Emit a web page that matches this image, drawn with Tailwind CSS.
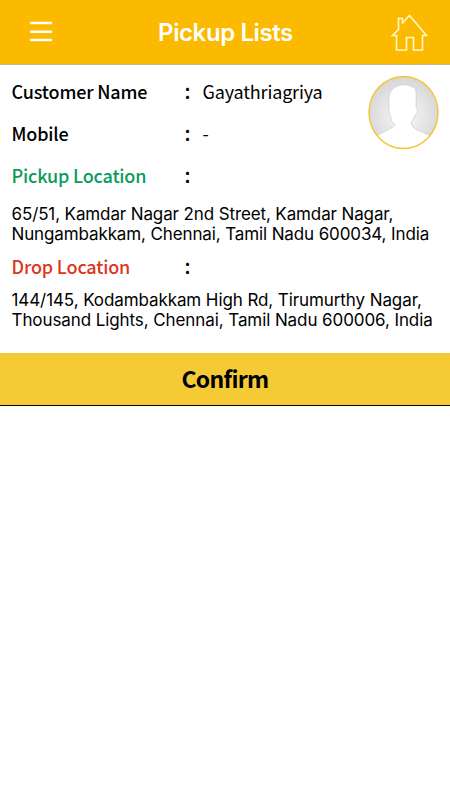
<!DOCTYPE html>
<html lang="en">
<head>
    <meta charset="UTF-8">
    <meta name="viewport" content="width=device-width, initial-scale=1.0">
    <title>Pickup Lists</title>
    <script src="https://cdn.jsdelivr.net/npm/@tailwindcss/browser@4"></script>
</head>
<body class="bg-white text-black font-['Noto_Sans_CJK_SC',sans-serif]">
    <!-- Header -->
    <header class="h-[65px] bg-[#fbba00] border-b border-[#c3b795] flex items-center justify-between pl-[28px] pr-[22px]">
        <button aria-label="Menu" class="w-[33px]">
            <svg class="block" width="25" height="22" viewBox="0 0 25 22" fill="none" stroke="#fff" stroke-width="2.5" stroke-linecap="round">
                <path d="M3 2h20M3 10.7h20M3 19h20"/>
            </svg>
        </button>
        <h1 class="font-['Inter',sans-serif] font-semibold text-[24px] leading-none text-white whitespace-nowrap pt-px tracking-[-0.4px]">Pickup Lists</h1>
        <button aria-label="Home">
            <svg class="block" width="38" height="38" viewBox="0 0 38 38" fill="none" stroke="#fff8c8" stroke-width="1.6">
                <path d="M6.5 37V22.5H2.5L8.5 16.5V5.5H12.5V10L19.5 2.5L36.5 22.5H32.5V37H23.5V24.5H16.5V37Z"/>
            </svg>
        </button>
    </header>

    <!-- Customer details -->
    <main class="h-[288px] pl-[11.5px] pr-[11px] pt-[5px] relative">
        <div class="flex items-center h-[42px] text-[18px] tracking-[-0.17px]">
            <span class="w-[173px] font-medium">Customer Name</span>
            <span class="w-[18px] font-medium text-[20px]">:</span>
            <span>Gayathriagriya</span>
        </div>
        <div class="flex items-center h-[42px] text-[18px] tracking-[-0.17px]">
            <span class="w-[173px] font-medium">Mobile</span>
            <span class="w-[18px] font-medium text-[20px]">:</span>
            <span>-</span>
        </div>
        <div class="flex items-center h-[42px] text-[18px] tracking-[-0.17px]">
            <span class="w-[173px] font-medium text-[#0a9b5b]">Pickup Location</span>
            <span class="w-[18px] font-medium text-[20px]">:</span>
        </div>
        <p class="font-['Inter',sans-serif] text-[17px] leading-[20px] tracking-[-0.12px] mt-[8px] whitespace-nowrap">65/51, Kamdar Nagar 2nd Street, Kamdar Nagar,<br>Nungambakkam, Chennai, Tamil Nadu 600034, India</p>
        <div class="flex items-center h-[42px] text-[18px] tracking-[-0.17px] mt-px">
            <span class="w-[173px] font-medium text-[#dc3522]">Drop Location</span>
            <span class="w-[18px] font-medium text-[20px]">:</span>
        </div>
        <p class="font-['Inter',sans-serif] text-[17px] leading-[20px] tracking-[-0.09px] mt-[3px] whitespace-nowrap">144/145, Kodambakkam High Rd, Tirumurthy Nagar,<br>Thousand Lights, Chennai, Tamil Nadu 600006, India</p>

        <!-- Avatar -->
        <svg class="absolute right-[11px] top-[10px]" width="72" height="75" viewBox="0 0 72 75">
            <defs>
                <radialGradient id="shade" cx=".5" cy=".55" r=".55">
                    <stop offset="0" stop-color="#fafafa"/>
                    <stop offset="1" stop-color="#d6d6d6"/>
                </radialGradient>
                <clipPath id="round"><ellipse cx="36.5" cy="37.5" rx="34.5" ry="36"/></clipPath>
            </defs>
            <ellipse cx="36.5" cy="37.5" rx="34.5" ry="36" fill="url(#shade)"/>
            <path clip-path="url(#round)" fill="#fff" stroke="#c8c8c8" stroke-width=".7" d="M0 66C10 60 18 57 24 53C26 52 27 51 28 50L24.5 46C24 44 24 41 23 40C21 38 22 33 22 31C22 24 21 20 24 16C28 10 36 9 40 10C43 10 45 12 48 13C50 17 49 26 49 31C51 34 51 39 48 40C47 43 47 45 44 47C45 49 45 51 47 53C53 57 65 60 72 66V80H0Z"/>
            <ellipse cx="36.5" cy="37.5" rx="34.5" ry="36" fill="none" stroke="#f3c632" stroke-width="1.4"/>
        </svg>
    </main>

    <button class="w-full h-[52px] bg-[#f4ca35] flex items-center justify-center font-bold text-[23px] leading-none tracking-[-0.7px] pb-[2px]">Confirm</button>
    <div class="h-px bg-black"></div>
</body>
</html>
